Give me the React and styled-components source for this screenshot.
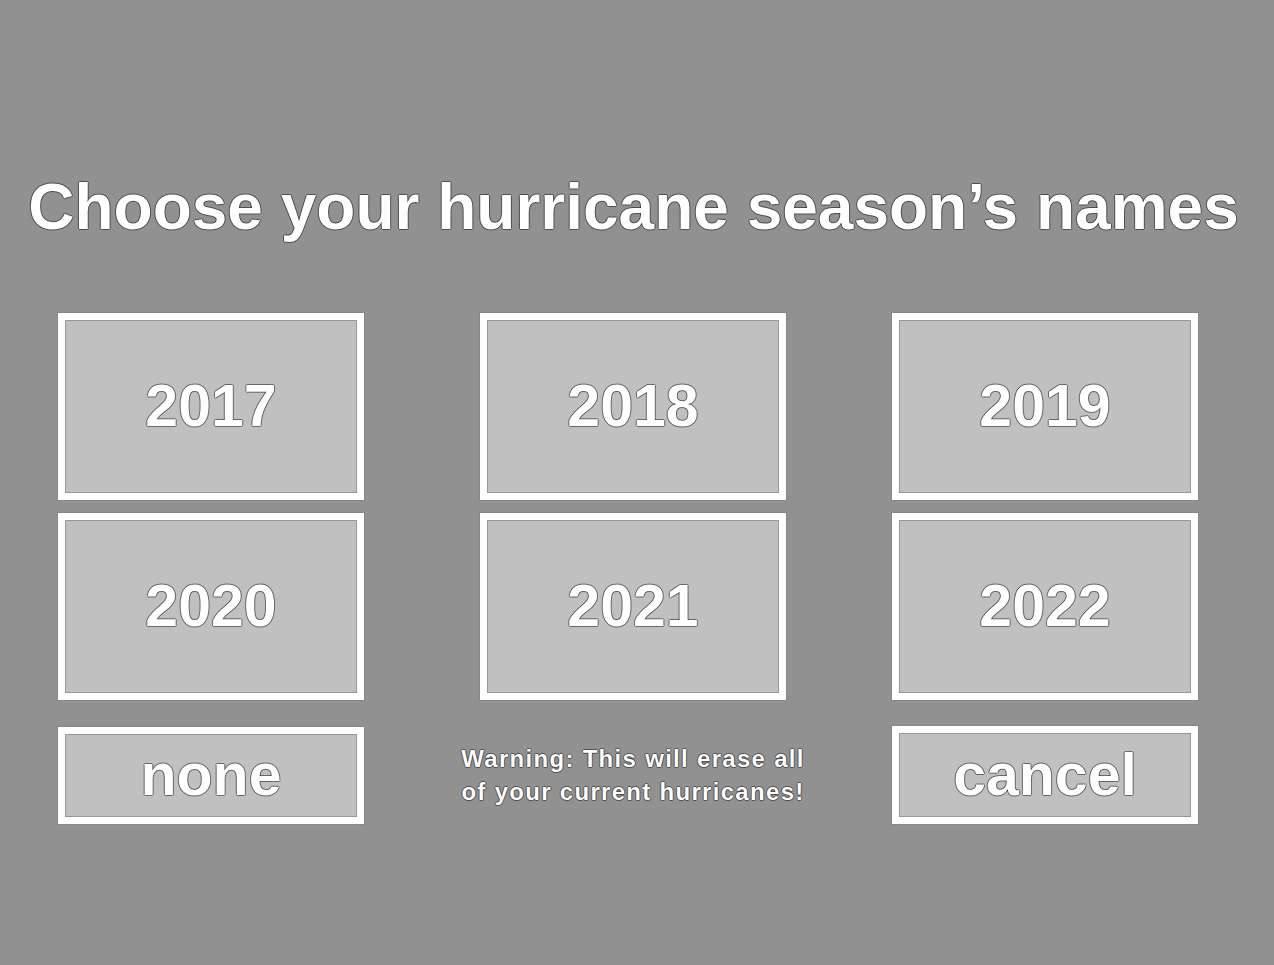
import React from "react";
import styled, { createGlobalStyle } from "styled-components";

const Global = createGlobalStyle`
  html, body {
    margin: 0;
    padding: 0;
    background: #919191;
  }
  body {
    font-family: "Liberation Sans", Arial, sans-serif;
  }
`;

const Screen = styled.div`
  width: 1274px;
  height: 965px;
  background: #919191;
  padding-top: 170px;
  box-sizing: border-box;
  overflow: hidden;
`;

const outline = `
  text-shadow:
    1px 0 0 rgba(0, 0, 0, 0.45),
    -1px 0 0 rgba(0, 0, 0, 0.45),
    0 1px 0 rgba(0, 0, 0, 0.45),
    0 -1px 0 rgba(0, 0, 0, 0.45);
`;

const Title = styled.h1`
  margin: 0;
  height: 74px;
  font-size: 64px;
  line-height: 74px;
  font-weight: 700;
  color: #fff;
  text-align: center;
  padding-right: 7px;
  ${outline}
`;

const Grid = styled.div`
  display: grid;
  grid-template-columns: 306px 116px 306px 106px 306px;
  grid-template-rows: 187px 187px 0px 98px;
  row-gap: 13px;
  margin-top: 69px;
  margin-left: 58px;
`;

const Choice = styled.button`
  grid-column: ${(p) => p.$col};
  grid-row: ${(p) => p.$row || "auto"};
  align-self: ${(p) => p.$align || "stretch"};
  height: ${(p) => p.$h || "auto"};
  box-sizing: border-box;
  display: flex;
  align-items: center;
  justify-content: center;
  padding: 0;
  margin: 0;
  background: #c0c0c0;
  border: 7px solid #fff;
  box-shadow: 0 0 0 1px #878787, inset 0 0 0 1px #979797;
  font-family: "Liberation Sans", Arial, sans-serif;
  font-size: 59px;
  font-weight: 700;
  line-height: 1;
  color: #fff;
  cursor: pointer;
  ${outline}
`;

const Warning = styled.div`
  grid-column: 3;
  grid-row: 4;
  display: flex;
  align-items: center;
  justify-content: center;
  text-align: center;
  white-space: nowrap;
  font-size: 24px;
  font-weight: 700;
  line-height: 33px;
  letter-spacing: 1.3px;
  color: #fff;
  ${outline}
`;

const years = ["2017", "2018", "2019", "2020", "2021", "2022"];
const cols = [1, 3, 5];

export default function App() {
  return (
    <>
      <Global />
      <Screen>
        <Title>Choose your hurricane season’s names</Title>
        <Grid>
          {years.map((y, i) => (
            <Choice key={y} $col={cols[i % 3]} $row={i < 3 ? 1 : 2}>
              {y}
            </Choice>
          ))}
          <Choice $col={1} $row={4} $align="end" $h="97px">
            none
          </Choice>
          <Warning>
            <span>
              Warning: This will erase all
              <br />
              of your current hurricanes!
            </span>
          </Warning>
          <Choice $col={5} $row={4}>
            cancel
          </Choice>
        </Grid>
      </Screen>
    </>
  );
}
